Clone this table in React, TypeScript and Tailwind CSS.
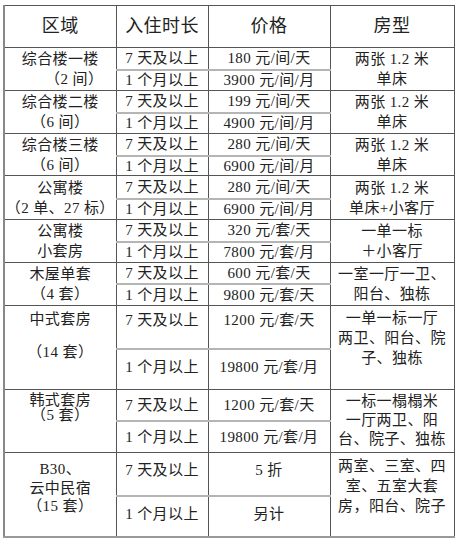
import type { ReactNode } from "react";

const font = { fontFamily: '"Liberation Serif", "Noto Sans CJK SC", serif' };

type Group = {
  area: ReactNode;
  room: ReactNode;
  day: string;
  month: string;
  h: [string, string];
  areaCls?: string;
  roomCls?: string;
  dayCls?: string;
  monthCls?: string;
};

const groups: Group[] = [
  {
    area: (
      <>
        <div>综合楼一楼</div>
        <div className="pl-[28px]">（2 间）</div>
      </>
    ),
    room: (
      <>
        <div>两张 1.2 米</div>
        <div>单床</div>
      </>
    ),
    day: "180 元/间/天",
    month: "3900 元/间/月",
    h: ["h-[22px]", "h-[21px]"],
  },
  {
    area: (
      <>
        <div>综合楼二楼</div>
        <div>（6 间）</div>
      </>
    ),
    room: (
      <>
        <div>两张 1.2 米</div>
        <div>单床</div>
      </>
    ),
    day: "199 元/间/天",
    month: "4900 元/间/月",
    h: ["h-[22px]", "h-[21px]"],
  },
  {
    area: (
      <>
        <div>综合楼三楼</div>
        <div>（6 间）</div>
      </>
    ),
    room: (
      <>
        <div>两张 1.2 米</div>
        <div>单床</div>
      </>
    ),
    day: "280 元/间/天",
    month: "6900 元/间/月",
    h: ["h-[22px]", "h-[20px]"],
  },
  {
    area: (
      <>
        <div>公寓楼</div>
        <div>（2 单、27 标）</div>
      </>
    ),
    room: (
      <>
        <div>两张 1.2 米</div>
        <div>单床+小客厅</div>
      </>
    ),
    day: "280 元/间/天",
    month: "6900 元/间/月",
    h: ["h-[23px]", "h-[21px]"],
  },
  {
    area: (
      <>
        <div>公寓楼</div>
        <div>小套房</div>
      </>
    ),
    room: (
      <>
        <div>一单一标</div>
        <div>＋小客厅</div>
      </>
    ),
    day: "320 元/套/天",
    month: "7800 元/套/月",
    h: ["h-[22px]", "h-[21px]"],
  },
  {
    area: (
      <>
        <div>木屋单套</div>
        <div>（4 套）</div>
      </>
    ),
    room: (
      <>
        <div>一室一厅一卫、</div>
        <div>阳台、独栋</div>
      </>
    ),
    day: "600 元/套/天",
    month: "9800 元/套/天",
    h: ["h-[21px]", "h-[22px]"],
  },
  {
    area: (
      <>
        <div>中式套房</div>
        <div className="mt-[13px]">（14 套）</div>
      </>
    ),
    room: (
      <>
        <div>一单一标一厅</div>
        <div>两卫、阳台、院</div>
        <div>子、独栋</div>
      </>
    ),
    day: "1200 元/套/天",
    month: "19800 元/套/月",
    h: ["h-[43px]", "h-[41px]"],
    areaCls: "align-top pt-[3px]",
    roomCls: "align-top pt-[2px]",
    dayCls: "align-top pt-[4.5px]",
    monthCls: "align-top pt-[8.5px]",
  },
  {
    area: (
      <div className="leading-[15px]">
        <div>韩式套房</div>
        <div>（5 套）</div>
      </div>
    ),
    room: (
      <div className="leading-[19px]">
        <div>一标一榻榻米</div>
        <div>一厅两卫、阳</div>
        <div>台、院子、独栋</div>
      </div>
    ),
    day: "1200 元/套/天",
    month: "19800 元/套/月",
    h: ["h-[31px]", "h-[32px]"],
    areaCls: "align-top pt-[3px]",
    roomCls: "align-top pt-[2px]",
  },
  {
    area: (
      <div className="leading-[18.5px]">
        <div>B30、</div>
        <div>云中民宿</div>
        <div>（15 套）</div>
      </div>
    ),
    room: (
      <div className="leading-[20px]">
        <div>两室、三室、四</div>
        <div>室、五室大套</div>
        <div>房，阳台、院子</div>
      </div>
    ),
    day: "5 折",
    month: "另计",
    h: ["h-[43px]", "h-[41px]"],
    areaCls: "align-top pt-[7px]",
    roomCls: "align-top pt-[3px]",
    dayCls: "align-top pt-[7.5px]",
    monthCls: "align-top pt-[8.5px]",
  },
];

const dark = "border border-[#555]";

export default function App() {
  return (
    <div className="w-[455px] h-[540px] bg-white text-[#222]" style={font}>
      <table className="ml-[3px] mt-[5px] w-[450px] table-fixed border-collapse text-center text-[15px] leading-[21px] tracking-[0.4px]">
        <colgroup>
          <col className="w-[112px]" />
          <col className="w-[92px]" />
          <col className="w-[122px]" />
          <col className="w-[124px]" />
        </colgroup>
        <thead>
          <tr className="h-[42px] text-[18px]">
            <th className={`${dark} border-l-2 border-l-[#888] font-normal`}>区域</th>
            <th className={`${dark} font-normal`}>入住时长</th>
            <th className={`${dark} font-normal`}>价格</th>
            <th className={`${dark} font-normal`}>房型</th>
          </tr>
        </thead>
        <tbody>
          {groups.map((g, i) => {
            const last = i === groups.length - 1;
            return [
              <tr key={`${i}a`} className={g.h[0]}>
                <td
                  rowSpan={2}
                  className={`${dark} border-l-2 border-l-[#888] p-0 leading-[20px] ${last ? "border-b-2 border-b-[#999]" : ""} ${g.areaCls ?? "align-middle"}`}
                >
                  {g.area}
                </td>
                <td
                  className={`${dark} border-b-2 border-b-[#b5b5b5] p-0 leading-[18px] ${g.dayCls ?? "align-middle"}`}
                >
                  7 天及以上
                </td>
                <td
                  className={`${dark} border-b-2 border-b-[#b5b5b5] p-0 leading-[18px] ${g.dayCls ?? "align-middle"}`}
                >
                  {g.day}
                </td>
                <td
                  rowSpan={2}
                  className={`${dark} p-0 leading-[20px] ${last ? "border-b-2 border-b-[#999]" : ""} ${g.roomCls ?? "align-middle"}`}
                >
                  {g.room}
                </td>
              </tr>,
              <tr key={`${i}b`} className={g.h[1]}>
                <td
                  className={`${dark} p-0 leading-[18px] ${last ? "border-b-2 border-b-[#999]" : ""} ${g.monthCls ?? "align-middle"}`}
                >
                  1 个月以上
                </td>
                <td
                  className={`${dark} p-0 leading-[18px] ${last ? "border-b-2 border-b-[#999]" : ""} ${g.monthCls ?? "align-middle"}`}
                >
                  {g.month}
                </td>
              </tr>,
            ];
          })}
        </tbody>
      </table>
    </div>
  );
}
